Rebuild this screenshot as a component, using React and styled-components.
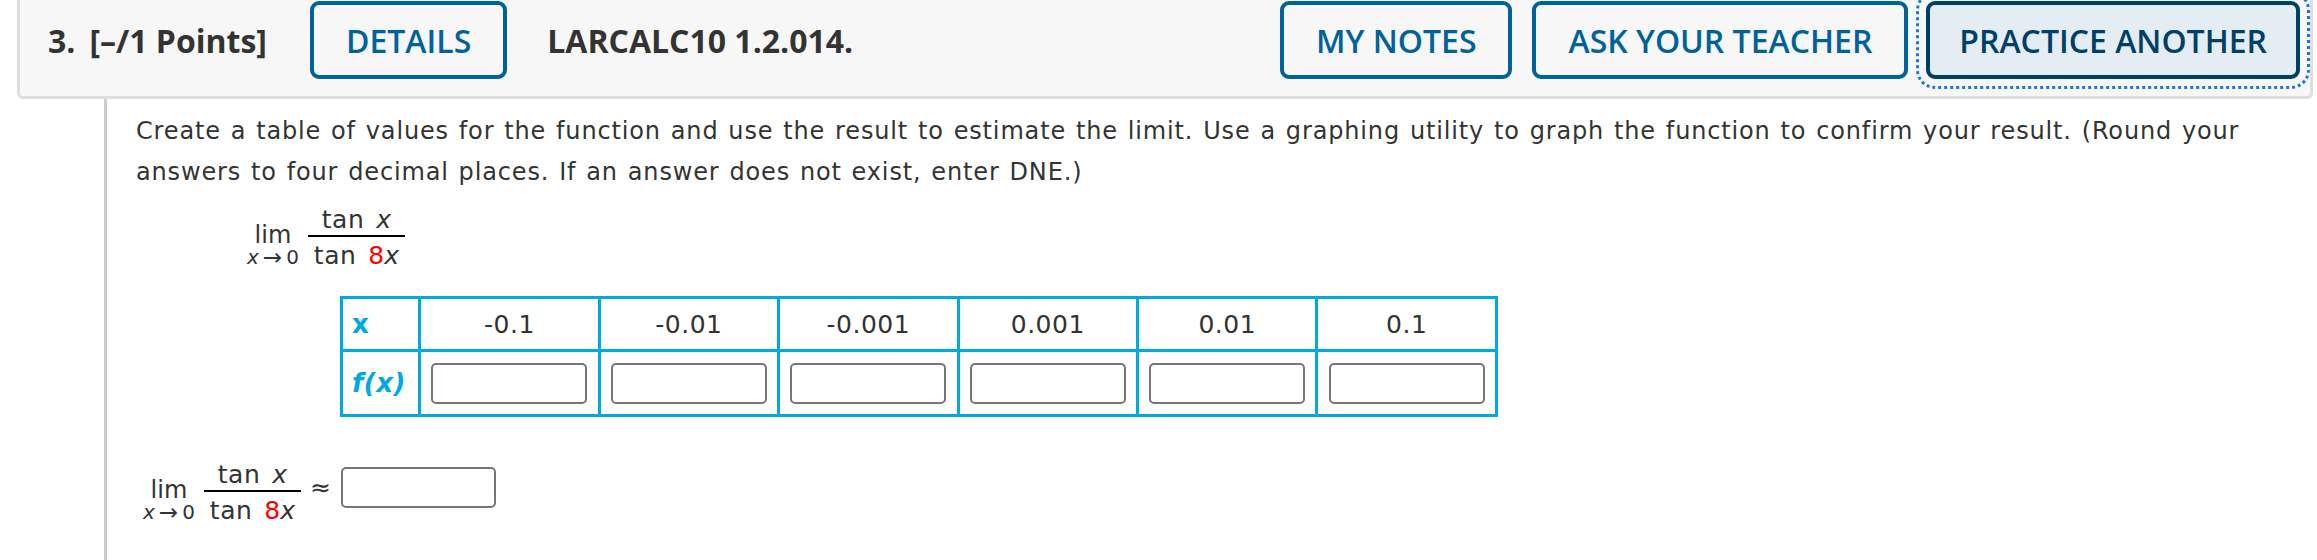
import React from "react";
import styled, { createGlobalStyle } from "styled-components";

const Global = createGlobalStyle`
  html, body { margin: 0; padding: 0; background: #fff; }
  body { overflow: hidden; }
  #root { min-height: 100vh; display: flex; flex-direction: column; }
`;

const Page = styled.div`
  flex: 1;
  display: flex;
  flex-direction: column;
`;

const Header = styled.div`
  display: flex;
  align-items: center;
  margin: 0 4px 0 17px;
  padding: 1px 10px 17px 28px;
  background: #f7f7f7;
  border: 3px solid #dedede;
  border-top: none;
  border-radius: 0 0 6px 6px;
  font-family: "Open Sans", "Liberation Sans", sans-serif;
`;

const Title = styled.div`
  font-size: 32px;
  font-weight: 700;
  color: #333;
  white-space: nowrap;
  margin-right: ${(p) => p.$gap || 0}px;
`;

const Num = styled.span`
  margin-right: 14px;
`;

const Spacer = styled.div`
  flex: 1;
`;

const Button = styled.button`
  box-sizing: border-box;
  height: 78px;
  padding: 0 ${(p) => (p.$active ? 29 : 32)}px;
  margin-left: ${(p) => p.$ml || 0}px;
  margin-right: ${(p) => p.$mr || 0}px;
  font-family: "Open Sans", "Liberation Sans", sans-serif;
  font-size: 32px;
  font-weight: 600;
  white-space: nowrap;
  color: ${(p) => (p.$active ? "#003f68" : "#00629b")};
  background: ${(p) => (p.$active ? "#e5edf4" : "transparent")};
  border: 4px solid ${(p) => (p.$active ? "#003f68" : "#00629b")};
  border-radius: 9px;
  outline: ${(p) => (p.$active ? "3px dotted #1c74e0" : "none")};
  outline-offset: 7px;
  cursor: pointer;
`;

const Content = styled.div`
  flex: 1;
  margin-left: 104px;
  border-left: 3px solid #cdcdcd;
  padding: 12px 30px 0 29px;
  font-family: Verdana, "DejaVu Sans", sans-serif;
  color: #333;
  display: flex;
  flex-direction: column;
  align-items: flex-start;
`;

const Para = styled.p`
  margin: 0;
  max-width: 2150px;
  font-size: 24px;
  line-height: 41px;
  letter-spacing: 0.85px;
  word-spacing: 1.4px;
`;

const MathRow = styled.div`
  display: flex;
  align-items: center;
  margin-left: ${(p) => p.$indent}px;
  margin-top: ${(p) => p.$top}px;
`;

const LimGroup = styled.div`
  display: flex;
  align-items: flex-end;
`;

const LimCol = styled.div`
  display: flex;
  flex-direction: column;
  align-items: center;
`;

const LimWord = styled.span`
  font-size: 24px;
  line-height: 24px;
`;

const LimSub = styled.span`
  display: flex;
  align-items: center;
  font-size: 20px;
  line-height: 21px;
  white-space: nowrap;
`;

const Var = styled.span`
  font-style: italic;
`;

const Arrow = styled.span`
  font-size: 23px;
  margin: 0 4px;
`;

const Frac = styled.div`
  display: flex;
  flex-direction: column;
  align-items: stretch;
  margin-left: 9px;
  font-size: 25px;
  line-height: 25px;
  white-space: nowrap;
`;

const Numer = styled.div`
  text-align: center;
  padding: 0 6px 3px;
`;

const Denom = styled.div`
  text-align: center;
  padding: 6px 6px 0;
  border-top: 2px solid #000;
`;

const Fn = styled.span`
  margin-right: 12px;
  letter-spacing: 0.5px;
`;

const Red = styled.span`
  color: #f00;
`;

const Approx = styled.span`
  font-size: 25px;
  margin: 0 10px 11px 9px;
`;

const AnswerBox = styled.input`
  box-sizing: border-box;
  width: ${(p) => p.$w || 156}px;
  height: 41px;
  border: 2px solid #767676;
  border-radius: 5px;
  background: #fff;
  margin: ${(p) => p.$margin || "0"};
  display: block;
`;

const Table = styled.table`
  margin-top: 28px;
  margin-left: 204px;
  border-collapse: collapse;
  table-layout: fixed;
  width: 1158px;
`;

const Cell = styled.td`
  border: 3px solid #00a9e0;
  padding: 0;
  height: ${(p) => p.$h}px;
  width: ${(p) => p.$w}px;
  text-align: ${(p) => (p.$label ? "left" : "center")};
  padding-left: ${(p) => (p.$label ? 9 : 0)}px;
  vertical-align: middle;
  font-size: ${(p) => (p.$label ? 26 : 25)}px;
  letter-spacing: 0.5px;
  color: ${(p) => (p.$label ? "#00a9e0" : "#333")};
  font-weight: ${(p) => (p.$label ? 700 : 400)};
  font-style: ${(p) => (p.$italic ? "italic" : "normal")};
  box-sizing: border-box;
`;

const values = ["-0.1", "-0.01", "-0.001", "0.001", "0.01", "0.1"];

function Limit() {
  return (
    <LimGroup>
      <LimCol>
        <LimWord>lim</LimWord>
        <LimSub>
          <Var>x</Var>
          <Arrow>→</Arrow>0
        </LimSub>
      </LimCol>
      <Frac>
        <Numer>
          <Fn>tan</Fn>
          <Var>x</Var>
        </Numer>
        <Denom>
          <Fn>tan</Fn>
          <Red>8</Red>
          <Var>x</Var>
        </Denom>
      </Frac>
    </LimGroup>
  );
}

export default function App() {
  return (
    <Page>
      <Global />
      <Header>
        <Title $gap={43}>
          <Num>3.</Num>[–/1 Points]
        </Title>
        <Button $mr={40}>DETAILS</Button>
        <Title>LARCALC10 1.2.014.</Title>
        <Spacer />
        <Button>MY NOTES</Button>
        <Button $ml={20}>ASK YOUR TEACHER</Button>
        <Button $ml={18} $active>
          PRACTICE ANOTHER
        </Button>
      </Header>
      <Content>
        <Para>
          Create a table of values for the function and use the result to estimate the limit. Use a
          graphing utility to graph the function to confirm your result. (Round your answers to four
          decimal places. If an answer does not exist, enter DNE.)
        </Para>
        <MathRow $indent={111} $top={14}>
          <Limit />
        </MathRow>
        <Table>
          <tbody>
            <tr>
              <Cell $label $h={53} $w={78}>
                x
              </Cell>
              {values.map((v) => (
                <Cell key={v} $h={53} $w={179}>
                  {v}
                </Cell>
              ))}
            </tr>
            <tr>
              <Cell $label $italic $h={65} $w={78}>
                f(x)
              </Cell>
              {values.map((v) => (
                <Cell key={v} $h={65} $w={179}>
                  <AnswerBox $margin="0 auto" aria-label={`f(${v})`} />
                </Cell>
              ))}
            </tr>
          </tbody>
        </Table>
        <MathRow $indent={7} $top={45}>
          <Limit />
          <Approx>≈</Approx>
          <AnswerBox $w={155} $margin="0 0 11px 0" aria-label="limit" />
        </MathRow>
      </Content>
    </Page>
  );
}
